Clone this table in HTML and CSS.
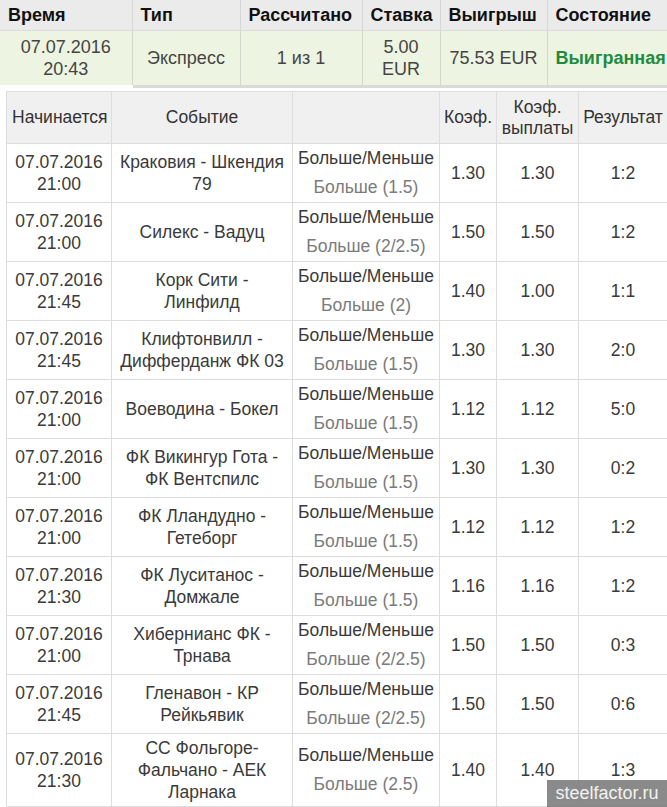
FILE: index.html
```html
<!DOCTYPE html>
<html lang="ru">
<head>
<meta charset="utf-8">
<title>Ставка</title>
<link rel="stylesheet" href="styles.css">
</head>
<body>
<div class="page">
  <table class="bet">
    <colgroup>
      <col class="c-time"><col class="c-type"><col class="c-calc"><col class="c-stake"><col class="c-win"><col class="c-state">
    </colgroup>
    <thead>
      <tr><th>Время</th><th>Тип</th><th>Рассчитано</th><th>Ставка</th><th>Выигрыш</th><th>Состояние</th></tr>
    </thead>
    <tbody>
      <tr>
        <td class="first">07.07.2016<br>20:43</td>
        <td>Экспресс</td>
        <td>1 из 1</td>
        <td>5.00<br>EUR</td>
        <td>75.53 EUR</td>
        <td class="won">Выигранная</td>
      </tr>
    </tbody>
  </table>

  <table class="events">
    <colgroup>
      <col class="e-start"><col class="e-event"><col class="e-market"><col class="e-odds"><col class="e-pay"><col class="e-res">
    </colgroup>
    <thead>
      <tr><th class="left">Начинается</th><th>Событие</th><th></th><th>Коэф.</th><th>Коэф.<br>выплаты</th><th>Результат</th></tr>
    </thead>
    <tbody>
      <tr><td>07.07.2016<br>21:00</td><td>Краковия - Шкендия 79</td><td class="market"><div class="m1">Больше/Меньше</div><div class="m2">Больше (1.5)</div></td><td>1.30</td><td>1.30</td><td>1:2</td></tr>
      <tr><td>07.07.2016<br>21:00</td><td>Силекс - Вадуц</td><td class="market"><div class="m1">Больше/Меньше</div><div class="m2">Больше (2/2.5)</div></td><td>1.50</td><td>1.50</td><td>1:2</td></tr>
      <tr><td>07.07.2016<br>21:45</td><td>Корк Сити -<br>Линфилд</td><td class="market"><div class="m1">Больше/Меньше</div><div class="m2">Больше (2)</div></td><td>1.40</td><td>1.00</td><td>1:1</td></tr>
      <tr><td>07.07.2016<br>21:45</td><td>Клифтонвилл -<br>Дифферданж ФК 03</td><td class="market"><div class="m1">Больше/Меньше</div><div class="m2">Больше (1.5)</div></td><td>1.30</td><td>1.30</td><td>2:0</td></tr>
      <tr><td>07.07.2016<br>21:00</td><td>Воеводина - Бокел</td><td class="market"><div class="m1">Больше/Меньше</div><div class="m2">Больше (1.5)</div></td><td>1.12</td><td>1.12</td><td>5:0</td></tr>
      <tr><td>07.07.2016<br>21:00</td><td>ФК Викингур Гота -<br>ФК Вентспилс</td><td class="market"><div class="m1">Больше/Меньше</div><div class="m2">Больше (1.5)</div></td><td>1.30</td><td>1.30</td><td>0:2</td></tr>
      <tr><td>07.07.2016<br>21:00</td><td>ФК Лландудно -<br>Гетеборг</td><td class="market"><div class="m1">Больше/Меньше</div><div class="m2">Больше (1.5)</div></td><td>1.12</td><td>1.12</td><td>1:2</td></tr>
      <tr><td>07.07.2016<br>21:30</td><td>ФК Луситанос -<br>Домжале</td><td class="market"><div class="m1">Больше/Меньше</div><div class="m2">Больше (1.5)</div></td><td>1.16</td><td>1.16</td><td>1:2</td></tr>
      <tr><td>07.07.2016<br>21:00</td><td>Хибернианс ФК -<br>Трнава</td><td class="market"><div class="m1">Больше/Меньше</div><div class="m2">Больше (2/2.5)</div></td><td>1.50</td><td>1.50</td><td>0:3</td></tr>
      <tr><td>07.07.2016<br>21:45</td><td>Гленавон - КР<br>Рейкьявик</td><td class="market"><div class="m1">Больше/Меньше</div><div class="m2">Больше (2/2.5)</div></td><td>1.50</td><td>1.50</td><td>0:6</td></tr>
      <tr class="tall"><td>07.07.2016<br>21:30</td><td>СС Фольгоре-<br>Фальчано - АЕК<br>Ларнака</td><td class="market"><div class="m1">Больше/Меньше</div><div class="m2">Больше (2.5)</div></td><td>1.40</td><td>1.40</td><td>1:3</td></tr>
    </tbody>
  </table>
</div>
<div class="watermark">steelfactor.ru</div>
</body>
</html>
```

FILE: styles.css
```css
html, body {
  margin: 0;
  padding: 0;
  background: #fff;
  overflow: hidden;
}
body {
  font-family: "Liberation Sans", Arial, sans-serif;
  color: #333;
  width: 667px;
  height: 807px;
  position: relative;
}
.page {
  display: flex;
  flex-direction: column;
  gap: 3px;
}
table {
  border-collapse: collapse;
  table-layout: fixed;
}

/* top bet summary */
.bet {
  width: 680px;
  font-size: 18px;
}
.c-time { width: 132px; }
.c-type { width: 108px; }
.c-calc { width: 122px; }
.c-stake { width: 78px; }
.c-win { width: 107px; }
.c-state { width: 133px; }
.bet th {
  background: #ebebeb;
  color: #111;
  font-weight: bold;
  text-align: left;
  padding: 0 7px 0 8px;
  height: 30px;
  border-left: 1px solid #d6d6d6;
  border-bottom: 1px solid #dcdcdc;
  white-space: nowrap;
}
.bet th:first-child { border-left: none; }
.bet td {
  background: #edf5e2;
  color: #444;
  text-align: center;
  height: 54px;
  line-height: 22px;
  padding: 0;
  border-left: 1px solid #d2d8cc;
  border-bottom: 3px solid #d9d9d9;
  white-space: nowrap;
}
.bet td.first {
  border-left: none;
  border-bottom: 3px solid #fff;
}
.bet td.won {
  color: #1e8b3e;
  font-weight: bold;
  text-align: left;
  padding-left: 8px;
}

/* events */
.events {
  margin-left: 6px;
  width: 661px;
  font-size: 17.5px;
}
.e-start { width: 105px; }
.e-event { width: 181px; }
.e-market { width: 147px; }
.e-odds { width: 57px; }
.e-pay { width: 82px; }
.e-res { width: 89px; }
.events th, .events td {
  border: 1px solid #dddddd;
  text-align: center;
  vertical-align: middle;
  line-height: 22px;
}
.events th {
  background: #f0f0f0;
  font-weight: normal;
  color: #333;
  height: 51px;
  padding: 0 2px;
  line-height: 21px;
}
.events th.left {
  text-align: left;
  padding-left: 5px;
}
.events td {
  height: 58px;
  padding: 0 2px;
  color: #3a3a3a;
}
.events tr.tall td {
  padding: 3px 2px;
}
.events td.market {
  padding: 0;
  white-space: nowrap;
}
.m1 {
  line-height: 28px;
  color: #3a3a3a;
}
.m2 {
  line-height: 30px;
  color: #7b7b7b;
}

.watermark {
  position: absolute;
  right: 0;
  bottom: 0;
  width: 120px;
  height: 27px;
  background: rgba(125, 125, 125, 0.9);
  color: #f2f2f2;
  font-family: "Liberation Sans", Arial, sans-serif;
  font-size: 18px;
  line-height: 27px;
  text-align: center;
}
```
